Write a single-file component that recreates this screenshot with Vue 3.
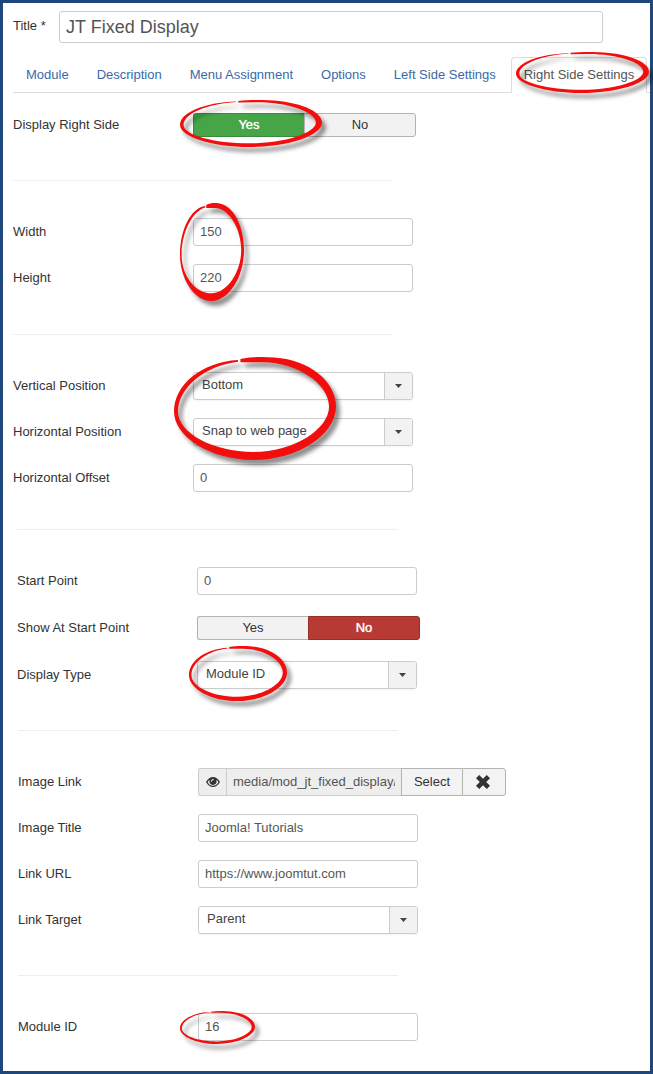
<template>
  <form class="page" @submit.prevent>
    <div class="title-row">
      <label for="title">Title *</label>
      <input id="title" v-model="form.title" type="text" />
    </div>
    <nav class="tabs">
      <a v-for="tab in tabs" :key="tab" href="#" :class="{ active: tab === current }" @click.prevent="current = tab">{{ tab }}</a>
    </nav>
    <section v-for="(group, i) in groups" :key="i" :class="['group', group.cls]">
      <hr v-if="i > 0" />
      <div v-for="f in group.fields" :key="f.key" :class="['row', { tall: f.type === 'toggle' }]">
        <span v-if="f.type === 'toggle'" :id="f.key + '-label'" class="label">{{ f.label }}</span>
        <label v-else class="label" :for="f.key">{{ f.label }}</label>

        <div v-if="f.type === 'toggle'" class="switch" role="radiogroup" :aria-labelledby="f.key + '-label'">
          <label v-for="v in ['Yes', 'No']" :key="v" :class="[v.toLowerCase(), { on: form[f.key] === v }]">
            <input v-model="form[f.key]" type="radio" :name="f.key" :value="v" />{{ v }}
          </label>
        </div>

        <div v-else-if="f.type === 'select'" class="dropdown">
          <select :id="f.key" v-model="form[f.key]">
            <option v-for="o in f.options" :key="o">{{ o }}</option>
          </select>
          <span class="arrow"><svg width="7" height="4" viewBox="0 0 7 4"><path d="M0 0H7L3.500 4Z" /></svg></span>
        </div>

        <div v-else-if="f.type === 'media'" class="media">
          <span class="eye">
            <svg width="14" height="10" viewBox="0 0 14 10">
              <path fill-rule="evenodd" d="M0 5C2 1.500 4.300 0 7 0s5 1.500 7 5c-2 3.500-4.300 5-7 5S2 8.500 0 5zM1.600 5.300C3 7.700 4.900 8.800 7 8.800s4-1.100 5.400-3.500C11.900 4.200 11.200 3.300 10.300 2.700 11.300 5.800 9.500 7.900 7 7.900S2.700 5.800 3.700 2.700C2.800 3.300 2.100 4.200 1.600 5.300zM5 4.300a.5.5 0 0 0 1 0c.1-.8.5-1.200 1.300-1.300a.5.5 0 0 0 0-1C6 2 5 3 5 4.300z" />
            </svg>
          </span>
          <input :id="f.key" type="text" :value="form[f.key]" readonly />
          <button type="button">Select</button>
          <button type="button" class="clear" aria-label="Clear">
            <svg width="14" height="14" viewBox="0 0 14 14">
              <path d="M3.200 0 7 3.700 10.800 0 14 3.200 10.200 7 14 10.800 10.800 14 7 10.300 3.200 14 0 10.800 3.800 7 0 3.200Z" />
            </svg>
          </button>
        </div>

        <input v-else :id="f.key" v-model="form[f.key]" class="text" type="text" />
      </div>
    </section>

    <!-- red markers over the important settings -->
    <svg v-for="r in rings" :key="r" :class="['ring', 'ring-' + r]" viewBox="0 0 100 100" preserveAspectRatio="none" aria-hidden="true">
      <path d="M41 2C47 0 54-.5 62 .5 84 3 100 24 100 48 100 76 76 100 49 100 22 100 0 77 0 53 0 27 17 5 39.500 3V4.500C20 8 2.500 29 2.500 53 2.500 74 24 92.200 49 92.200 74 92.200 95.700 70 95.700 48 95.700 26 76 5 55 5L41 5.200Z" />
    </svg>
  </form>
</template>

<script setup>
import { reactive, ref } from "vue";

const tabs = ["Module", "Description", "Menu Assignment", "Options", "Left Side Settings", "Right Side Settings"];
const current = ref("Right Side Settings");
const rings = ["tab", "display", "size", "position", "type", "module"];

const form = reactive({
  title: "JT Fixed Display",
  display: "Yes",
  width: "150",
  height: "220",
  vertical: "Bottom",
  horizontal: "Snap to web page",
  offset: "0",
  start: "0",
  showStart: "No",
  type: "Module ID",
  image: "media/mod_jt_fixed_display/",
  imageTitle: "Joomla! Tutorials",
  url: "https://www.joomtut.com",
  target: "Parent",
  moduleId: "16",
});

const groups = [
  { cls: "first", fields: [{ key: "display", label: "Display Right Side", type: "toggle" }] },
  {
    cls: "size",
    fields: [
      { key: "width", label: "Width" },
      { key: "height", label: "Height" },
    ],
  },
  {
    cls: "position",
    fields: [
      { key: "vertical", label: "Vertical Position", type: "select", options: ["Bottom"] },
      { key: "horizontal", label: "Horizontal Position", type: "select", options: ["Snap to web page"] },
      { key: "offset", label: "Horizontal Offset" },
    ],
  },
  {
    cls: "start",
    fields: [
      { key: "start", label: "Start Point" },
      { key: "showStart", label: "Show At Start Point", type: "toggle" },
      { key: "type", label: "Display Type", type: "select", options: ["Module ID"] },
    ],
  },
  {
    cls: "link",
    fields: [
      { key: "image", label: "Image Link", type: "media" },
      { key: "imageTitle", label: "Image Title" },
      { key: "url", label: "Link URL" },
      { key: "target", label: "Link Target", type: "select", options: ["Parent"] },
    ],
  },
  { cls: "link", fields: [{ key: "moduleId", label: "Module ID" }] },
];
</script>

<style>
body {
  margin: 0;
}
</style>

<style scoped>
* {
  box-sizing: border-box;
}
.page {
  position: relative;
  border: 3px solid #1e477b;
  padding: 8px 0 0 10px;
  background: #fff;
  color: #333;
  font: 13px/18px "Liberation Sans", Arial, sans-serif;
}
input,
select,
button {
  font: inherit;
  margin: 0;
}
input[type="text"] {
  min-width: 0;
  border: 1px solid #ccc;
  border-radius: 3px;
  padding: 0 6px 2px;
  background: #fff;
  color: #555;
  outline: none;
}
.title-row {
  display: flex;
  align-items: center;
  gap: 13px;
  padding-right: 47px;
  margin-bottom: 14px;
}
.title-row label {
  width: 33px;
  padding-bottom: 2px;
  white-space: nowrap;
}
.title-row input[type="text"] {
  flex: 1;
  height: 32px;
  padding-bottom: 0;
  font-size: 18px;
}
.tabs {
  display: flex;
  gap: 2px;
  border-bottom: 1px solid #ddd;
  margin-bottom: 17px;
}
.tabs a {
  border: 1px solid transparent;
  border-bottom: 0;
  border-radius: 4px 4px 0 0;
  padding: 8px 12px 9px;
  margin-bottom: -1px;
  color: #3a6aa8;
  text-decoration: none;
  white-space: nowrap;
}
.tabs a.active {
  border-color: #ddd;
  background: #fff;
  color: #555;
}
.group {
  display: flex;
  flex-direction: column;
  gap: 18px;
  padding-bottom: 41px;
}
.group.first {
  padding-bottom: 40px;
}
.group.size {
  padding-bottom: 42px;
}
.group.position {
  padding-bottom: 37px;
}
.group.start {
  padding-left: 4px;
}
.group.link {
  padding-left: 5px;
}
.group:last-of-type {
  padding-bottom: 30px;
}
hr {
  width: 380px;
  max-width: 100%;
  height: 1px;
  border: 0;
  margin: 0 0 19px;
  background: #eee;
}
.row {
  display: flex;
  align-items: center;
}
.tall {
  height: 30px;
}
.label {
  flex: none;
  width: 180px;
}
.text {
  width: 220px;
  height: 28px;
}
.switch {
  display: flex;
  width: 223px;
  height: 24px;
}
.switch label {
  flex: 1;
  border: 1px solid #b3b3b3;
  background: #f2f2f2;
  line-height: 21px;
  text-align: center;
}
.switch label.yes {
  border-right: 0;
  border-radius: 3px 0 0 3px;
}
.switch label.no {
  border-radius: 0 3px 3px 0;
}
.switch label.yes.on {
  border-color: #3b8a3e;
  background: #46a546;
  color: #fff;
}
.switch label.no.on {
  border-color: #942e2a;
  background: #b83a35;
  color: #fff;
}
.switch .on {
  text-shadow: 0 0 1px #fff;
}
.switch input {
  position: absolute;
  opacity: 0;
  pointer-events: none;
}
.dropdown {
  position: relative;
  width: 220px;
  height: 28px;
}
.dropdown select {
  appearance: none;
  width: 100%;
  height: 100%;
  border: 1px solid #ccc;
  border-radius: 3px;
  padding: 0 32px 2px 8px;
  background: #fff;
  color: #444;
  box-shadow: 0 1px 2px rgba(0, 0, 0, 0.05);
}
.arrow {
  position: absolute;
  inset: 1px 1px 1px auto;
  display: flex;
  align-items: center;
  justify-content: center;
  width: 28px;
  border-left: 1px solid #ccc;
  border-radius: 0 2px 2px 0;
  background: #f2f2f2;
  fill: #444;
  pointer-events: none;
}
.media {
  display: flex;
  height: 28px;
}
.eye {
  display: flex;
  justify-content: center;
  width: 28px;
  border: 1px solid #ccc;
  border-right: 0;
  border-radius: 3px 0 0 3px;
  padding-top: 8px;
  background: #eee;
  fill: #333;
}
.media input[type="text"] {
  width: 175px;
  border-right: 0;
  border-radius: 0;
  padding-bottom: 0;
  background: #eee;
}
.media button {
  width: 61px;
  border: 1px solid #b3b3b3;
  border-right: 0;
  padding: 0;
  background: #f3f3f3;
  color: #333;
}
.media .clear {
  display: flex;
  align-items: center;
  width: 44px;
  border-right: 1px solid #b3b3b3;
  border-radius: 0 3px 3px 0;
  padding: 0 0 1px 13px;
  fill: #333;
}
.ring {
  position: absolute;
  overflow: visible;
  fill: #f30e0e;
  filter: drop-shadow(4px 5px 2px rgba(0, 0, 0, 0.45));
  pointer-events: none;
}
.ring-tab {
  left: 513px;
  top: 49px;
  width: 133px;
  height: 41px;
}
.ring-display {
  left: 177px;
  top: 97px;
  width: 142px;
  height: 47px;
}
.ring-size {
  left: 177px;
  top: 200px;
  width: 64px;
  height: 98px;
}
.ring-position {
  left: 171px;
  top: 354px;
  width: 162px;
  height: 103px;
}
.ring-type {
  left: 186px;
  top: 643px;
  width: 98px;
  height: 55px;
}
.ring-module {
  left: 177px;
  top: 1008px;
  width: 75px;
  height: 33px;
}
</style>
